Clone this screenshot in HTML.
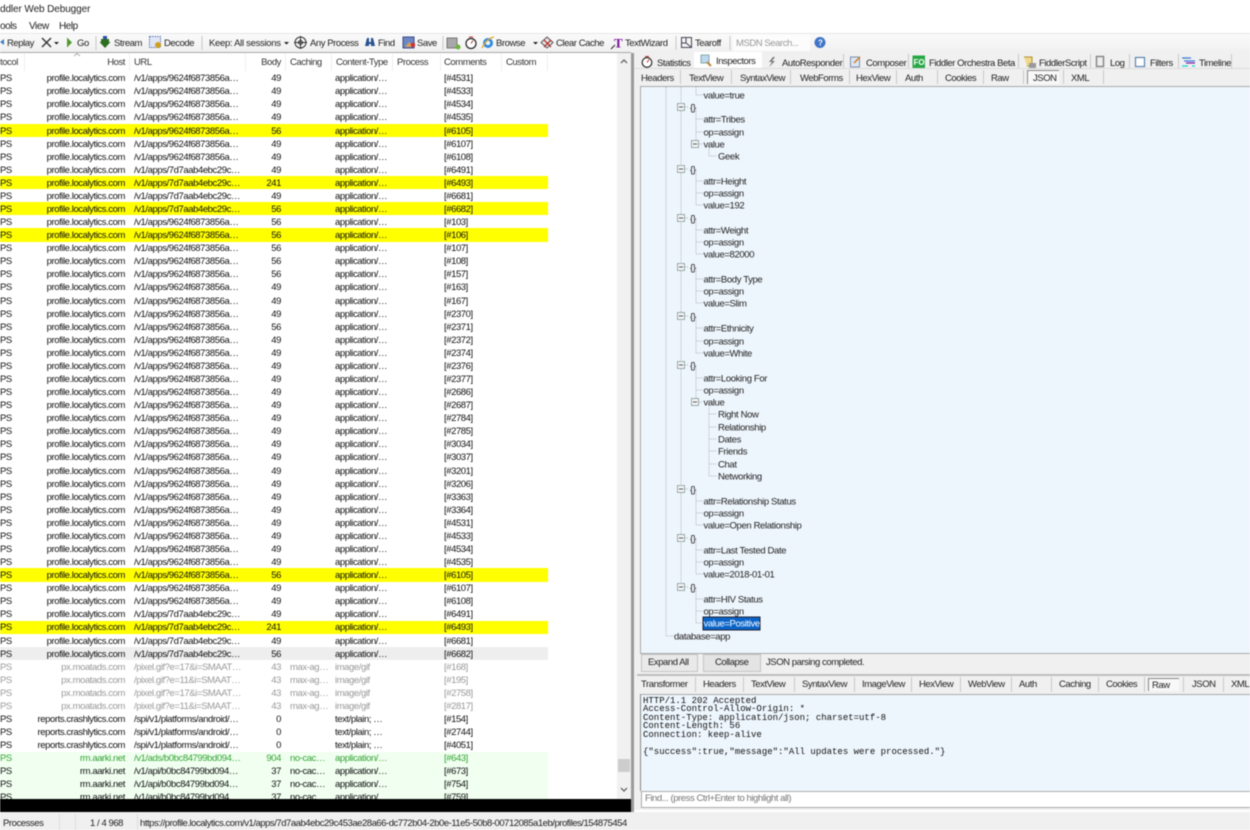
<!DOCTYPE html>
<html><head><meta charset="utf-8"><title>Fiddler Web Debugger</title>
<style>
html,body{margin:0;padding:0;width:1250px;height:830px;overflow:hidden;background:#fff}
#w{position:absolute;left:0;top:0;width:1250px;height:830px;overflow:hidden;filter:blur(.42px);font:9.5px "Liberation Sans",sans-serif;letter-spacing:-.44px;color:#222}
.a{position:absolute;white-space:nowrap}
.b{position:absolute}
#rows{position:absolute;left:0;top:71.5px;width:548px;height:727px;overflow:hidden}
.r{position:relative;height:13.09px;line-height:13.09px;width:548px;white-space:nowrap;color:#111;letter-spacing:-.42px}
.r i{position:absolute;font-style:normal;top:.7px}
.r i:nth-child(1){left:0}
.r i:nth-child(2){right:423px}
.r i:nth-child(3){left:134px}
.r i:nth-child(4){right:267px}
.r i:nth-child(5){left:290px}
.r i:nth-child(6){left:335px}
.r i:nth-child(7){left:444px}
.y{background:#ff0}
.e{background:#eee}
.m{color:#999}
.g{background:#f0fff0}
.gt{color:#36a336}
.s{position:absolute;width:1px;background:#c9c9c9}
.h{position:absolute;top:57px;white-space:nowrap;color:#333}
svg text{font:9.5px "Liberation Sans",sans-serif;letter-spacing:-.37px;fill:#222;transform:translateY(.7px)}
pre{position:absolute;left:643px;top:697px;margin:0;font:9px/8.45px "Liberation Mono",monospace;letter-spacing:0;color:#111}
</style></head><body><div id="w">

<div class="a" style="left:0;top:4px;font-size:10px;letter-spacing:-.1px">ddler Web Debugger</div>
<div class="a" style="left:0;top:21px;font-size:10px">ools</div>
<div class="a" style="left:29px;top:21px;font-size:10px">View</div>
<div class="a" style="left:59px;top:21px;font-size:10px">Help</div>

<div class="b" style="left:0;top:33px;width:1250px;height:19px;background:linear-gradient(#fafafa,#f0f0f0);border-top:1px solid #e6e6e6"></div>
<div class="b" style="left:0;top:52px;width:631px;height:1px;background:#a8a8a8"></div>
<div class="a" style="left:7px;top:38px">Replay</div>
<div class="a" style="left:77px;top:38px">Go</div>
<div class="a" style="left:114px;top:38px">Stream</div>
<div class="a" style="left:164px;top:38px">Decode</div>
<div class="a" style="left:209px;top:38px;letter-spacing:-.3px">Keep: All sessions</div>
<div class="a" style="left:310px;top:38px">Any Process</div>
<div class="a" style="left:378px;top:38px">Find</div>
<div class="a" style="left:417px;top:38px">Save</div>
<div class="a" style="left:496px;top:38px">Browse</div>
<div class="a" style="left:556px;top:38px">Clear Cache</div>
<div class="a" style="left:625px;top:38px">TextWizard</div>
<div class="a" style="left:695px;top:38px">Tearoff</div>
<div class="b" style="left:733px;top:34px;width:77px;height:17px;background:#fcfcfc"></div>
<div class="a" style="left:736px;top:38px;color:#999">MSDN Search...</div>

<div class="h" style="left:0">tocol</div>
<div class="h" style="right:1125px">Host</div>
<div class="h" style="left:134px">URL</div>
<div class="h" style="right:969px">Body</div>
<div class="h" style="left:290px">Caching</div>
<div class="h" style="left:336px">Content-Type</div>
<div class="h" style="left:397px">Process</div>
<div class="h" style="left:444px">Comments</div>
<div class="h" style="left:506px">Custom</div>
<div class="s" style="left:24px;top:54px;height:17px;background:#eee"></div>
<div class="s" style="left:129px;top:54px;height:17px;background:#eee"></div>
<div class="s" style="left:245px;top:54px;height:17px;background:#eee"></div>
<div class="s" style="left:285px;top:54px;height:17px;background:#eee"></div>
<div class="s" style="left:331px;top:54px;height:17px;background:#eee"></div>
<div class="s" style="left:392px;top:54px;height:17px;background:#eee"></div>
<div class="s" style="left:440px;top:54px;height:17px;background:#eee"></div>
<div class="s" style="left:501px;top:54px;height:17px;background:#eee"></div>
<div class="s" style="left:547px;top:54px;height:17px;background:#eee"></div>

<div id="rows">
<div class="r"><i>PS</i><i>profile.localytics.com</i><i>/v1/apps/9624f6873856a…</i><i>49</i><i></i><i>application/…</i><i>[#4531]</i></div>
<div class="r"><i>PS</i><i>profile.localytics.com</i><i>/v1/apps/9624f6873856a…</i><i>49</i><i></i><i>application/…</i><i>[#4533]</i></div>
<div class="r"><i>PS</i><i>profile.localytics.com</i><i>/v1/apps/9624f6873856a…</i><i>49</i><i></i><i>application/…</i><i>[#4534]</i></div>
<div class="r"><i>PS</i><i>profile.localytics.com</i><i>/v1/apps/9624f6873856a…</i><i>49</i><i></i><i>application/…</i><i>[#4535]</i></div>
<div class="r y"><i>PS</i><i>profile.localytics.com</i><i>/v1/apps/9624f6873856a…</i><i>56</i><i></i><i>application/…</i><i>[#6105]</i></div>
<div class="r"><i>PS</i><i>profile.localytics.com</i><i>/v1/apps/9624f6873856a…</i><i>49</i><i></i><i>application/…</i><i>[#6107]</i></div>
<div class="r"><i>PS</i><i>profile.localytics.com</i><i>/v1/apps/9624f6873856a…</i><i>49</i><i></i><i>application/…</i><i>[#6108]</i></div>
<div class="r"><i>PS</i><i>profile.localytics.com</i><i>/v1/apps/7d7aab4ebc29c…</i><i>49</i><i></i><i>application/…</i><i>[#6491]</i></div>
<div class="r y"><i>PS</i><i>profile.localytics.com</i><i>/v1/apps/7d7aab4ebc29c…</i><i>241</i><i></i><i>application/…</i><i>[#6493]</i></div>
<div class="r"><i>PS</i><i>profile.localytics.com</i><i>/v1/apps/7d7aab4ebc29c…</i><i>49</i><i></i><i>application/…</i><i>[#6681]</i></div>
<div class="r y"><i>PS</i><i>profile.localytics.com</i><i>/v1/apps/7d7aab4ebc29c…</i><i>56</i><i></i><i>application/…</i><i>[#6682]</i></div>
<div class="r"><i>PS</i><i>profile.localytics.com</i><i>/v1/apps/9624f6873856a…</i><i>56</i><i></i><i>application/…</i><i>[#103]</i></div>
<div class="r y"><i>PS</i><i>profile.localytics.com</i><i>/v1/apps/9624f6873856a…</i><i>56</i><i></i><i>application/…</i><i>[#106]</i></div>
<div class="r"><i>PS</i><i>profile.localytics.com</i><i>/v1/apps/9624f6873856a…</i><i>56</i><i></i><i>application/…</i><i>[#107]</i></div>
<div class="r"><i>PS</i><i>profile.localytics.com</i><i>/v1/apps/9624f6873856a…</i><i>56</i><i></i><i>application/…</i><i>[#108]</i></div>
<div class="r"><i>PS</i><i>profile.localytics.com</i><i>/v1/apps/9624f6873856a…</i><i>56</i><i></i><i>application/…</i><i>[#157]</i></div>
<div class="r"><i>PS</i><i>profile.localytics.com</i><i>/v1/apps/9624f6873856a…</i><i>49</i><i></i><i>application/…</i><i>[#163]</i></div>
<div class="r"><i>PS</i><i>profile.localytics.com</i><i>/v1/apps/9624f6873856a…</i><i>49</i><i></i><i>application/…</i><i>[#167]</i></div>
<div class="r"><i>PS</i><i>profile.localytics.com</i><i>/v1/apps/9624f6873856a…</i><i>49</i><i></i><i>application/…</i><i>[#2370]</i></div>
<div class="r"><i>PS</i><i>profile.localytics.com</i><i>/v1/apps/9624f6873856a…</i><i>56</i><i></i><i>application/…</i><i>[#2371]</i></div>
<div class="r"><i>PS</i><i>profile.localytics.com</i><i>/v1/apps/9624f6873856a…</i><i>49</i><i></i><i>application/…</i><i>[#2372]</i></div>
<div class="r"><i>PS</i><i>profile.localytics.com</i><i>/v1/apps/9624f6873856a…</i><i>49</i><i></i><i>application/…</i><i>[#2374]</i></div>
<div class="r"><i>PS</i><i>profile.localytics.com</i><i>/v1/apps/9624f6873856a…</i><i>49</i><i></i><i>application/…</i><i>[#2376]</i></div>
<div class="r"><i>PS</i><i>profile.localytics.com</i><i>/v1/apps/9624f6873856a…</i><i>49</i><i></i><i>application/…</i><i>[#2377]</i></div>
<div class="r"><i>PS</i><i>profile.localytics.com</i><i>/v1/apps/9624f6873856a…</i><i>49</i><i></i><i>application/…</i><i>[#2686]</i></div>
<div class="r"><i>PS</i><i>profile.localytics.com</i><i>/v1/apps/9624f6873856a…</i><i>49</i><i></i><i>application/…</i><i>[#2687]</i></div>
<div class="r"><i>PS</i><i>profile.localytics.com</i><i>/v1/apps/9624f6873856a…</i><i>49</i><i></i><i>application/…</i><i>[#2784]</i></div>
<div class="r"><i>PS</i><i>profile.localytics.com</i><i>/v1/apps/9624f6873856a…</i><i>49</i><i></i><i>application/…</i><i>[#2785]</i></div>
<div class="r"><i>PS</i><i>profile.localytics.com</i><i>/v1/apps/9624f6873856a…</i><i>49</i><i></i><i>application/…</i><i>[#3034]</i></div>
<div class="r"><i>PS</i><i>profile.localytics.com</i><i>/v1/apps/9624f6873856a…</i><i>49</i><i></i><i>application/…</i><i>[#3037]</i></div>
<div class="r"><i>PS</i><i>profile.localytics.com</i><i>/v1/apps/9624f6873856a…</i><i>49</i><i></i><i>application/…</i><i>[#3201]</i></div>
<div class="r"><i>PS</i><i>profile.localytics.com</i><i>/v1/apps/9624f6873856a…</i><i>49</i><i></i><i>application/…</i><i>[#3206]</i></div>
<div class="r"><i>PS</i><i>profile.localytics.com</i><i>/v1/apps/9624f6873856a…</i><i>49</i><i></i><i>application/…</i><i>[#3363]</i></div>
<div class="r"><i>PS</i><i>profile.localytics.com</i><i>/v1/apps/9624f6873856a…</i><i>49</i><i></i><i>application/…</i><i>[#3364]</i></div>
<div class="r"><i>PS</i><i>profile.localytics.com</i><i>/v1/apps/9624f6873856a…</i><i>49</i><i></i><i>application/…</i><i>[#4531]</i></div>
<div class="r"><i>PS</i><i>profile.localytics.com</i><i>/v1/apps/9624f6873856a…</i><i>49</i><i></i><i>application/…</i><i>[#4533]</i></div>
<div class="r"><i>PS</i><i>profile.localytics.com</i><i>/v1/apps/9624f6873856a…</i><i>49</i><i></i><i>application/…</i><i>[#4534]</i></div>
<div class="r"><i>PS</i><i>profile.localytics.com</i><i>/v1/apps/9624f6873856a…</i><i>49</i><i></i><i>application/…</i><i>[#4535]</i></div>
<div class="r y"><i>PS</i><i>profile.localytics.com</i><i>/v1/apps/9624f6873856a…</i><i>56</i><i></i><i>application/…</i><i>[#6105]</i></div>
<div class="r"><i>PS</i><i>profile.localytics.com</i><i>/v1/apps/9624f6873856a…</i><i>49</i><i></i><i>application/…</i><i>[#6107]</i></div>
<div class="r"><i>PS</i><i>profile.localytics.com</i><i>/v1/apps/9624f6873856a…</i><i>49</i><i></i><i>application/…</i><i>[#6108]</i></div>
<div class="r"><i>PS</i><i>profile.localytics.com</i><i>/v1/apps/7d7aab4ebc29c…</i><i>49</i><i></i><i>application/…</i><i>[#6491]</i></div>
<div class="r y"><i>PS</i><i>profile.localytics.com</i><i>/v1/apps/7d7aab4ebc29c…</i><i>241</i><i></i><i>application/…</i><i>[#6493]</i></div>
<div class="r"><i>PS</i><i>profile.localytics.com</i><i>/v1/apps/7d7aab4ebc29c…</i><i>49</i><i></i><i>application/…</i><i>[#6681]</i></div>
<div class="r e"><i>PS</i><i>profile.localytics.com</i><i>/v1/apps/7d7aab4ebc29c…</i><i>56</i><i></i><i>application/…</i><i>[#6682]</i></div>
<div class="r m"><i>PS</i><i>px.moatads.com</i><i>/pixel.gif?e=17&amp;i=SMAAT…</i><i>43</i><i>max-ag…</i><i>image/gif</i><i>[#168]</i></div>
<div class="r m"><i>PS</i><i>px.moatads.com</i><i>/pixel.gif?e=11&amp;i=SMAAT…</i><i>43</i><i>max-ag…</i><i>image/gif</i><i>[#195]</i></div>
<div class="r m"><i>PS</i><i>px.moatads.com</i><i>/pixel.gif?e=17&amp;i=SMAAT…</i><i>43</i><i>max-ag…</i><i>image/gif</i><i>[#2758]</i></div>
<div class="r m"><i>PS</i><i>px.moatads.com</i><i>/pixel.gif?e=11&amp;i=SMAAT…</i><i>43</i><i>max-ag…</i><i>image/gif</i><i>[#2817]</i></div>
<div class="r"><i>PS</i><i>reports.crashlytics.com</i><i>/spi/v1/platforms/android/…</i><i>0</i><i></i><i>text/plain; …</i><i>[#154]</i></div>
<div class="r"><i>PS</i><i>reports.crashlytics.com</i><i>/spi/v1/platforms/android/…</i><i>0</i><i></i><i>text/plain; …</i><i>[#2744]</i></div>
<div class="r"><i>PS</i><i>reports.crashlytics.com</i><i>/spi/v1/platforms/android/…</i><i>0</i><i></i><i>text/plain; …</i><i>[#4051]</i></div>
<div class="r g gt"><i>PS</i><i>rm.aarki.net</i><i>/v1/ads/b0bc84799bd094…</i><i>904</i><i>no-cac…</i><i>application/…</i><i>[#643]</i></div>
<div class="r g"><i>PS</i><i>rm.aarki.net</i><i>/v1/api/b0bc84799bd094…</i><i>37</i><i>no-cac…</i><i>application/…</i><i>[#673]</i></div>
<div class="r g"><i>PS</i><i>rm.aarki.net</i><i>/v1/api/b0bc84799bd094…</i><i>37</i><i>no-cac…</i><i>application/…</i><i>[#754]</i></div>
<div class="r g"><i>PS</i><i>rm.aarki.net</i><i>/v1/api/b0bc84799bd094…</i><i>37</i><i>no-cac…</i><i>application/…</i><i>[#759]</i></div>
</div>

<div class="b" style="left:617px;top:53px;width:14px;height:746px;background:#f1f1f1"></div>
<div class="b" style="left:618px;top:759px;width:12px;height:13px;background:#cdcdcd"></div>
<div class="b" style="left:0;top:799px;width:631px;height:13px;background:#000"></div>
<div class="b" style="left:631px;top:53px;width:3px;height:759px;background:#9a9a9a"></div>
<div class="b" style="left:634px;top:53px;width:616px;height:757px;background:#f0f0f0"></div>

<div class="b" style="left:694px;top:52px;width:68px;height:17px;background:#fff"></div>
<div class="a" style="left:657px;top:58px">Statistics</div>
<div class="a" style="left:716px;top:56px">Inspectors</div>
<div class="a" style="left:782px;top:58px">AutoResponder</div>
<div class="a" style="left:866px;top:58px">Composer</div>
<div class="a" style="left:929px;top:58px">Fiddler Orchestra Beta</div>
<div class="a" style="left:1039px;top:58px">FiddlerScript</div>
<div class="a" style="left:1110px;top:58px">Log</div>
<div class="a" style="left:1150px;top:58px">Filters</div>
<div class="a" style="left:1199px;top:58px">Timeline</div>
<div class="s" style="left:843px;top:54px;height:15px"></div>
<div class="s" style="left:908px;top:54px;height:15px"></div>
<div class="s" style="left:1018px;top:54px;height:15px"></div>
<div class="s" style="left:1090px;top:54px;height:15px"></div>
<div class="s" style="left:1129px;top:54px;height:15px"></div>
<div class="s" style="left:1178px;top:54px;height:15px"></div>
<div class="s" style="left:1231px;top:54px;height:15px"></div>
<div class="b" style="left:634px;top:68px;width:616px;height:1px;background:#dcdcdc"></div>

<div class="a" style="left:641px;top:73px">Headers</div>
<div class="a" style="left:689px;top:73px">TextView</div>
<div class="a" style="left:740px;top:73px">SyntaxView</div>
<div class="a" style="left:800px;top:73px">WebForms</div>
<div class="a" style="left:856px;top:73px">HexView</div>
<div class="a" style="left:905px;top:73px">Auth</div>
<div class="a" style="left:945px;top:73px">Cookies</div>
<div class="a" style="left:991px;top:73px">Raw</div>
<div class="b" style="left:1027px;top:70px;width:31px;height:13px;background:#f8f8f8;border-top:1px solid #888;border-left:1px solid #888"></div>
<div class="a" style="left:1033px;top:73px">JSON</div>
<div class="a" style="left:1071px;top:73px">XML</div>
<div class="s" style="left:680px;top:70px;height:14px"></div>
<div class="s" style="left:731px;top:70px;height:14px"></div>
<div class="s" style="left:790px;top:70px;height:14px"></div>
<div class="s" style="left:849px;top:70px;height:14px"></div>
<div class="s" style="left:896px;top:70px;height:14px"></div>
<div class="s" style="left:937px;top:70px;height:14px"></div>
<div class="s" style="left:983px;top:70px;height:14px"></div>
<div class="s" style="left:1023px;top:70px;height:14px"></div>
<div class="s" style="left:1063px;top:70px;height:14px"></div>
<div class="s" style="left:1103px;top:70px;height:14px"></div>

<div class="b" style="left:640px;top:86px;width:610px;height:566px;background:#eef6fd;border-top:1px solid #aaa;border-left:1px solid #aaa;border-bottom:1px solid #aaa"></div>

<div class="b" style="left:641px;top:654px;width:55px;height:16px;background:#e9e9e9;border:1px solid #c4c4c4"></div>
<div class="a" style="left:648px;top:657px">Expand All</div>
<div class="b" style="left:703px;top:654px;width:56px;height:16px;background:#e4e4e4;border:1px solid #c4c4c4"></div>
<div class="a" style="left:715px;top:657px">Collapse</div>
<div class="a" style="left:766px;top:657px">JSON parsing completed.</div>
<div class="b" style="left:637px;top:674px;width:613px;height:2px;background:#bdbdbd"></div>

<div class="a" style="left:641px;top:679px">Transformer</div>
<div class="a" style="left:703px;top:679px">Headers</div>
<div class="a" style="left:751px;top:679px">TextView</div>
<div class="a" style="left:802px;top:679px">SyntaxView</div>
<div class="a" style="left:862px;top:679px">ImageView</div>
<div class="a" style="left:919px;top:679px">HexView</div>
<div class="a" style="left:968px;top:679px">WebView</div>
<div class="a" style="left:1019px;top:679px">Auth</div>
<div class="a" style="left:1059px;top:679px">Caching</div>
<div class="a" style="left:1106px;top:679px">Cookies</div>
<div class="b" style="left:1148px;top:678px;width:30px;height:12px;background:#f8f8f8;border-top:1px solid #888;border-left:1px solid #888"></div>
<div class="a" style="left:1152px;top:680px">Raw</div>
<div class="a" style="left:1192px;top:679px">JSON</div>
<div class="a" style="left:1231px;top:679px">XML</div>
<div class="s" style="left:695px;top:677px;height:15px"></div>
<div class="s" style="left:743px;top:677px;height:15px"></div>
<div class="s" style="left:794px;top:677px;height:15px"></div>
<div class="s" style="left:854px;top:677px;height:15px"></div>
<div class="s" style="left:911px;top:677px;height:15px"></div>
<div class="s" style="left:960px;top:677px;height:15px"></div>
<div class="s" style="left:1011px;top:677px;height:15px"></div>
<div class="s" style="left:1051px;top:677px;height:15px"></div>
<div class="s" style="left:1098px;top:677px;height:15px"></div>
<div class="s" style="left:1144px;top:677px;height:15px"></div>
<div class="s" style="left:1183px;top:677px;height:15px"></div>
<div class="s" style="left:1223px;top:677px;height:15px"></div>

<div class="b" style="left:640px;top:694px;width:610px;height:96px;background:#eef6fd;border-top:1px solid #aaa;border-left:1px solid #888"></div>
<pre>HTTP/1.1 202 Accepted
Access-Control-Allow-Origin: *
Content-Type: application/json; charset=utf-8
Content-Length: 56
Connection: keep-alive

{"success":true,"message":"All updates were processed."}</pre>
<div class="b" style="left:641px;top:791px;width:609px;height:15px;background:#fff;border:1px solid #aaa;border-right:0"></div>
<div class="a" style="left:645px;top:793px;color:#777">Find... (press Ctrl+Enter to highlight all)</div>

<div class="b" style="left:0;top:812px;width:1250px;height:18px;background:#f0f0f0"></div>
<div class="a" style="left:3px;top:818px">Processes</div>
<div class="a" style="left:90px;top:818px">1 / 4 968</div>
<div class="a" style="left:140px;top:818px;letter-spacing:-.47px">https://profile.localytics.com/v1/apps/7d7aab4ebc29c453ae28a66-dc772b04-2b0e-11e5-50b8-00712085a1eb/profiles/154875454</div>
<div class="s" style="left:59px;top:814px;height:16px;background:#ddd"></div>
<div class="s" style="left:75px;top:814px;height:16px;background:#ddd"></div>
<div class="s" style="left:137px;top:814px;height:16px;background:#ddd"></div>

<svg class="b" style="left:0;top:0" width="1250" height="830" viewBox="0 0 1250 830">
<path d="M621 63l3-3 3 3M621 788l3 3 3-3" fill="none" stroke="#555" stroke-width="1.2"/>
<path d="M74 56l3-2.5 3 2.5" fill="none" stroke="#aaa"/>
<path d="M96 36v14M202 36v14M443 36v14M676 36v14M730 36v14" stroke="#c8c8c8"/>
<path d="M0 42l4-3v6z" fill="#3f7fc0"/>
<path d="M42 38l9 9M51 38l-9 9" stroke="#333" stroke-width="1.4" fill="none"/>
<path d="M54 42h5l-2.5 2.5zM284 42h5l-2.5 2.5zM533 42h5l-2.5 2.5z" fill="#222"/>
<path d="M67 37.5l5 5-5 5z" fill="#4f9a2e"/>
<path d="M101 39h8v3h1.5l-5.5 6-5.5-6h1.5z" fill="#2d6e22"/>
<path d="M103 36h4v3h-4z" fill="#2b50a8"/>
<rect x="149.5" y="36.5" width="11" height="11" fill="#dfe6f5" stroke="#5a6fb5" stroke-dasharray="1.5 1"/>
<circle cx="158" cy="45" r="3" fill="#d0a020"/>
<circle cx="300.5" cy="42.5" r="5.5" fill="none" stroke="#333"/>
<circle cx="300.5" cy="42.5" r="2" fill="none" stroke="#333"/>
<path d="M294 42.5h13M300.5 36v13" stroke="#333"/>
<path d="M365 46l2-8h2v4h2v-4h2l2 8h-4v-2h-2v2z" fill="#26528f"/>
<rect x="403" y="37" width="11" height="11" fill="#6d86c4" stroke="#3c4d88"/>
<path d="M405 47l4-5 5 5z" fill="#d9a05a"/>
<rect x="411" y="43" width="4" height="4" fill="#c33"/>
<rect x="447" y="38" width="10" height="10" fill="#a8a8a8" stroke="#777"/>
<circle cx="458" cy="47" r="2.5" fill="#6cb43c"/>
<circle cx="471" cy="43.5" r="5" fill="#fff" stroke="#222" stroke-width="1.2"/>
<path d="M469 37h4M471 43.5l2-3" stroke="#b33" fill="none"/>
<circle cx="488" cy="43" r="5" fill="#2f8be0"/>
<circle cx="488" cy="43" r="2.2" fill="#e8f4ff"/>
<path d="M482 48c3-6 7-10 12-11" fill="none" stroke="#e3a72a" stroke-width="1.3"/>
<path d="M547 37l6 5.5-6 5.500-6-5.500z" fill="#e6e6e6" stroke="#555"/>
<path d="M544 40l7 7M551 40l-7 7" stroke="#b02020" stroke-width="1.2"/>
<text x="614" y="47" style="font:bold 13px 'Liberation Serif',serif;fill:#7a0f9a">T</text>
<path d="M611 49l4-4" stroke="#222"/>
<rect x="681.5" y="37.500" width="10" height="10" fill="#f4f4f4" stroke="#445"/>
<path d="M686 38v5h-4M686 43l5 4" stroke="#445" fill="none"/>
<circle cx="820" cy="42.5" r="5.5" fill="#3f74c8"/>
<text x="818" y="45" style="font:bold 8px 'Liberation Sans',sans-serif;fill:#fff">?</text>

<circle cx="647" cy="62.5" r="4.8" fill="#fff" stroke="#222" stroke-width="1.1"/>
<path d="M645 56.500h4M647 62.500l2-3" stroke="#b33" fill="none"/>
<rect x="701" y="55" width="8" height="8" fill="#bcd8f0" stroke="#8aa"/>
<path d="M707 62l4 4" stroke="#b88a3a" stroke-width="2"/>
<path d="M773 57l-4 5h3l-3 5 6-6h-3l3-4z" fill="#777"/>
<rect x="850.5" y="57" width="9" height="10" fill="#dce6f4" stroke="#7b8fb0"/>
<path d="M854 63l6-6" stroke="#d08020" stroke-width="1.5"/>
<rect x="912.5" y="55.5" width="12.5" height="12.5" fill="#28a745"/>
<text x="913.5" y="64.500" style="font:bold 8px 'Liberation Sans',sans-serif;fill:#fff;letter-spacing:0">FO</text>
<path d="M1024 57h8v9h-5" fill="#f0d98a" stroke="#b09030"/>
<rect x="1029" y="63" width="7" height="5" fill="#999"/>
<rect x="1096.5" y="56.5" width="7" height="10" fill="#eee" stroke="#888" stroke-width="1.5"/>
<rect x="1135.5" y="57.5" width="9" height="9" fill="#fff" stroke="#5b84b0" stroke-width="1.2"/>
<path d="M1182 58h9M1184 61h11" stroke="#3a7ad8" stroke-width="1.2"/>
<path d="M1186 63h9" stroke="#7a1fa2" stroke-width="1.2"/>
<path d="M1182 66h6M1192 66h3" stroke="#19d3d3" stroke-width="1.2"/>

<g stroke="#b5b5b5" stroke-dasharray="1 1" fill="none">
<path d="M666 87v549h8M681 87v500"/>
<path d="M696 87v8h7"/>
<path d="M696 107v37M696 119h7M696 132h7M709 144v12h7"/>
<path d="M696 169v36M696 181h7M696 193h7M696 205h7"/>
<path d="M696 218v36M696 230h7M696 242h7M696 254h7"/>
<path d="M696 267v36M696 279h7M696 291h7M696 303h7"/>
<path d="M696 316v37M696 328h7M696 341h7M696 353h7"/>
<path d="M696 365v37M696 378h7M696 390h7M709 402v74M709 414h7M709 427h7M709 439h7M709 451h7M709 464h7M709 476h7"/>
<path d="M696 489v36M696 501h7M696 513h7M696 525h7"/>
<path d="M696 538v36M696 550h7M696 562h7M696 574h7"/>
<path d="M696 587v36M696 599h7M696 611h7M696 623h7"/>
<path d="M685 107h4M685 169h4M685 218h4M685 267h4M685 316h4M685 365h4M685 489h4M685 538h4M685 587h4M699 144h4M699 402h4"/>
</g>
<g fill="#f2f4f6" stroke="#9aa">
<rect x="677.5" y="103.5" width="7" height="7"/><rect x="677.5" y="165.5" width="7" height="7"/><rect x="677.5" y="214.5" width="7" height="7"/><rect x="677.5" y="263.5" width="7" height="7"/><rect x="677.5" y="312.5" width="7" height="7"/><rect x="677.5" y="361.5" width="7" height="7"/><rect x="677.5" y="485.5" width="7" height="7"/><rect x="677.5" y="534.5" width="7" height="7"/><rect x="677.5" y="583.5" width="7" height="7"/><rect x="691.5" y="140.5" width="7" height="7"/><rect x="691.5" y="398.5" width="7" height="7"/>
</g>
<path d="M679 107h4M679 169h4M679 218h4M679 267h4M679 316h4M679 365h4M679 489h4M679 538h4M679 587h4M693 144h4M693 402h4" stroke="#555"/>
<rect x="703" y="617" width="57" height="13" fill="#0a64c8" stroke="#223"/>
<text x="703.5" y="98">value=true</text>
<text x="690" y="110">{}</text>
<text x="703.5" y="122">attr=Tribes</text>
<text x="703.5" y="135">op=assign</text>
<text x="703.5" y="147">value</text>
<text x="718" y="159">Geek</text>
<text x="690" y="172">{}</text>
<text x="703.5" y="184">attr=Height</text>
<text x="703.5" y="196">op=assign</text>
<text x="703.5" y="208">value=192</text>
<text x="690" y="221">{}</text>
<text x="703.5" y="233">attr=Weight</text>
<text x="703.5" y="245">op=assign</text>
<text x="703.5" y="257">value=82000</text>
<text x="690" y="270">{}</text>
<text x="703.5" y="282">attr=Body Type</text>
<text x="703.5" y="294">op=assign</text>
<text x="703.5" y="306">value=Slim</text>
<text x="690" y="319">{}</text>
<text x="703.5" y="331">attr=Ethnicity</text>
<text x="703.5" y="344">op=assign</text>
<text x="703.5" y="356">value=White</text>
<text x="690" y="368">{}</text>
<text x="703.5" y="381">attr=Looking For</text>
<text x="703.5" y="393">op=assign</text>
<text x="703.5" y="405">value</text>
<text x="718" y="417">Right Now</text>
<text x="718" y="430">Relationship</text>
<text x="718" y="442">Dates</text>
<text x="718" y="454">Friends</text>
<text x="718" y="467">Chat</text>
<text x="718" y="479">Networking</text>
<text x="690" y="492">{}</text>
<text x="703.5" y="504">attr=Relationship Status</text>
<text x="703.5" y="516">op=assign</text>
<text x="703.5" y="528">value=Open Relationship</text>
<text x="690" y="541">{}</text>
<text x="703.5" y="553">attr=Last Tested Date</text>
<text x="703.5" y="565">op=assign</text>
<text x="703.5" y="577">value=2018-01-01</text>
<text x="690" y="590">{}</text>
<text x="703.5" y="602">attr=HIV Status</text>
<text x="703.5" y="614">op=assign</text>
<text x="703.5" y="626" style="fill:#fff">value=Positive</text>
<text x="674" y="639">database=app</text>
</svg>
</div></body></html>
